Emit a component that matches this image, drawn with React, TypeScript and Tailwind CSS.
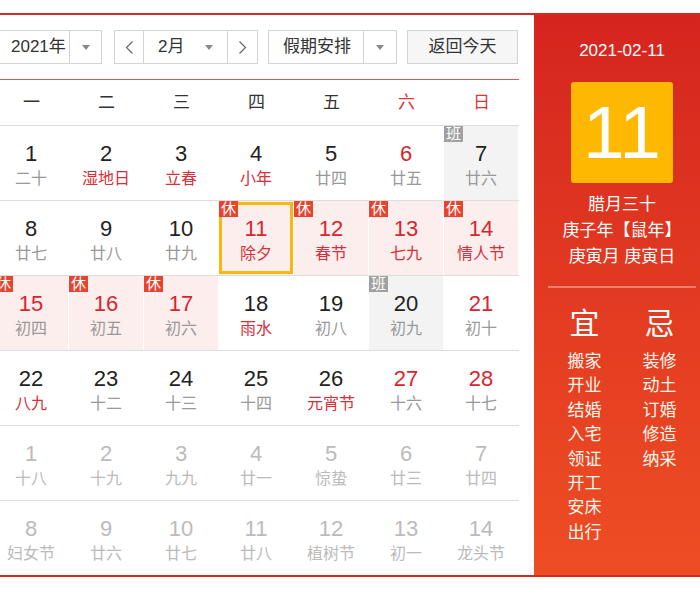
import React from 'react';

type Day = {
  n: number;
  l: string;
  numRed?: boolean;
  lunarRed?: boolean;
  tag?: '休' | '班';
  other?: boolean;
  sel?: boolean;
};

const weeks: Day[][] = [
  [
    { n: 1, l: '二十' },
    { n: 2, l: '湿地日', lunarRed: true },
    { n: 3, l: '立春', lunarRed: true },
    { n: 4, l: '小年', lunarRed: true },
    { n: 5, l: '廿四' },
    { n: 6, l: '廿五', numRed: true },
    { n: 7, l: '廿六', tag: '班' },
  ],
  [
    { n: 8, l: '廿七' },
    { n: 9, l: '廿八' },
    { n: 10, l: '廿九' },
    { n: 11, l: '除夕', numRed: true, lunarRed: true, tag: '休', sel: true },
    { n: 12, l: '春节', numRed: true, lunarRed: true, tag: '休' },
    { n: 13, l: '七九', numRed: true, lunarRed: true, tag: '休' },
    { n: 14, l: '情人节', numRed: true, lunarRed: true, tag: '休' },
  ],
  [
    { n: 15, l: '初四', numRed: true, tag: '休' },
    { n: 16, l: '初五', numRed: true, tag: '休' },
    { n: 17, l: '初六', numRed: true, tag: '休' },
    { n: 18, l: '雨水', lunarRed: true },
    { n: 19, l: '初八' },
    { n: 20, l: '初九', tag: '班' },
    { n: 21, l: '初十', numRed: true },
  ],
  [
    { n: 22, l: '八九', lunarRed: true },
    { n: 23, l: '十二' },
    { n: 24, l: '十三' },
    { n: 25, l: '十四' },
    { n: 26, l: '元宵节', lunarRed: true },
    { n: 27, l: '十六', numRed: true },
    { n: 28, l: '十七', numRed: true },
  ],
  [
    { n: 1, l: '十八', other: true },
    { n: 2, l: '十九', other: true },
    { n: 3, l: '九九', other: true },
    { n: 4, l: '廿一', other: true },
    { n: 5, l: '惊蛰', other: true },
    { n: 6, l: '廿三', other: true },
    { n: 7, l: '廿四', other: true },
  ],
  [
    { n: 8, l: '妇女节', other: true },
    { n: 9, l: '廿六', other: true },
    { n: 10, l: '廿七', other: true },
    { n: 11, l: '廿八', other: true },
    { n: 12, l: '植树节', other: true },
    { n: 13, l: '初一', other: true },
    { n: 14, l: '龙头节', other: true },
  ],
];

const weekdays = ['一', '二', '三', '四', '五', '六', '日'];
const yi = ['搬家', '开业', '结婚', '入宅', '领证', '开工', '安床', '出行'];
const ji = ['装修', '动土', '订婚', '修造', '纳采'];

function Caret() {
  return <span className="w-0 h-0 border-l-[4px] border-r-[4px] border-t-[5px] border-l-transparent border-r-transparent border-t-[#888]" />;
}

function Chevron({ dir }: { dir: 'left' | 'right' }) {
  return (
    <svg width="9" height="15" viewBox="0 0 9 15" fill="none">
      <polyline
        points={dir === 'left' ? '7.5,1.5 1.5,7.5 7.5,13.5' : '1.5,1.5 7.5,7.5 1.5,13.5'}
        stroke="#666"
        strokeWidth="1.2"
      />
    </svg>
  );
}

function Cell({ d }: { d: Day }) {
  let bg = 'bg-white';
  if (d.tag === '休') bg = 'bg-[#fdeeee]';
  if (d.tag === '班') bg = 'bg-[#f3f3f3]';

  const numColor = d.other ? 'text-[#bbbbbb]' : d.numRed ? 'text-[#d9252f]' : 'text-[#222]';
  const lunarColor = d.other ? 'text-[#bbbbbb]' : d.lunarRed ? 'text-[#d7303a]' : 'text-[#999]';

  return (
    <div className={`relative h-[74px] border-r border-white flex flex-col items-center pt-[15px] ${bg}`}>
      {d.sel && <div className="absolute inset-x-0 top-[1px] bottom-[1px] border-[3px] border-[#f8b811]" />}
      {d.tag && (
        <span
          className={`absolute top-0 left-0 w-[19px] h-[16px] text-[15px] leading-[16px] text-center text-white ${
            d.tag === '休' ? 'bg-[#e8432f]' : 'bg-[#a0a0a0]'
          }`}
        >
          {d.tag}
        </span>
      )}
      <span className={`text-[22px] leading-[26px] ${numColor}`}>{d.n}</span>
      <span className={`mt-[1px] text-[16px] leading-[21px] ${lunarColor}`}>{d.l}</span>
    </div>
  );
}

export default function App() {
  return (
    <div className="w-[700px] h-[600px] overflow-hidden bg-white font-['Liberation_Sans','Noto_Sans_CJK_SC',sans-serif]">
      <div className="mt-[13px] ml-[-6px] w-[722px] flex border-t-2 border-b-2 border-[#d52a21]">
        {/* calendar */}
        <div className="w-[525px] mr-[15px] pt-[15px]">
          <div className="flex items-center pb-[15px] border-b border-[#e25555] text-[17px] text-[#333]">
            <div className="flex h-[34px] w-[108px] border border-[#d4d4d4]">
              <div className="flex-1 flex items-center pl-[16px]">2021年</div>
              <div className="w-[32px] border-l border-[#d4d4d4] flex items-center justify-center">
                <Caret />
              </div>
            </div>
            <div className="ml-[12px] flex h-[34px] w-[144px] border border-[#d4d4d4]">
              <div className="w-[29px] border-r border-[#d4d4d4] flex items-center justify-center">
                <Chevron dir="left" />
              </div>
              <div className="flex-1 flex items-center justify-between pl-[14px] pr-[14px]">
                <span>2月</span>
                <Caret />
              </div>
              <div className="w-[30px] border-l border-[#d4d4d4] flex items-center justify-center">
                <Chevron dir="right" />
              </div>
            </div>
            <div className="ml-[10px] flex h-[34px] w-[129px] border border-[#d4d4d4]">
              <div className="flex-1 flex items-center pl-[14px]">假期安排</div>
              <div className="w-[33px] border-l border-[#d4d4d4] flex items-center justify-center">
                <Caret />
              </div>
            </div>
            <button className="ml-[10px] h-[34px] w-[111px] border border-[#d4d4d4] bg-[#f6f6f6] flex items-center justify-center">
              返回今天
            </button>
          </div>

          <div className="grid grid-cols-7 h-[45px] items-center text-[17px]">
            {weekdays.map((w, i) => (
              <div key={w} className={`text-center ${i >= 5 ? 'text-[#dd3333]' : 'text-[#333]'}`}>
                {w}
              </div>
            ))}
          </div>

          {weeks.map((row, ri) => (
            <div key={ri} className="grid grid-cols-7 border-t border-[#dddddd]">
              {row.map((d, ci) => (
                <Cell key={ci} d={d} />
              ))}
            </div>
          ))}
        </div>

        {/* side panel */}
        <div className="w-[176px] bg-gradient-to-b from-[#d5241f] to-[#ee4d24] text-white flex flex-col items-center pt-[26px]">
          <div className="text-[17px] leading-[20px]">2021-02-11</div>
          <div className="mt-[21px] w-[102px] h-[101px] rounded-[3px] bg-[#ffb800] flex items-center justify-center text-[75px] leading-none">
            11
          </div>
          <div className="mt-[9px] text-[17px] leading-[26px] text-center">
            <div>腊月三十</div>
            <div>庚子年【鼠年】</div>
            <div>庚寅月 庚寅日</div>
          </div>
          <div className="mt-[16px] h-[2px] w-[148px] bg-[#f0806c]" />
          <div className="mt-[18px] grid grid-cols-2 w-[150px]">
            <div className="flex flex-col items-center">
              <div className="text-[30px] leading-[36px]">宜</div>
              <div className="mt-[8px] flex flex-col items-center text-[17px] leading-[24.4px] text-[#fff6ec]">
                {yi.map((t) => (
                  <div key={t}>{t}</div>
                ))}
              </div>
            </div>
            <div className="flex flex-col items-center">
              <div className="text-[30px] leading-[36px]">忌</div>
              <div className="mt-[8px] flex flex-col items-center text-[17px] leading-[24.4px] text-[#fff6ec]">
                {ji.map((t) => (
                  <div key={t}>{t}</div>
                ))}
              </div>
            </div>
          </div>
        </div>
      </div>
    </div>
  );
}
